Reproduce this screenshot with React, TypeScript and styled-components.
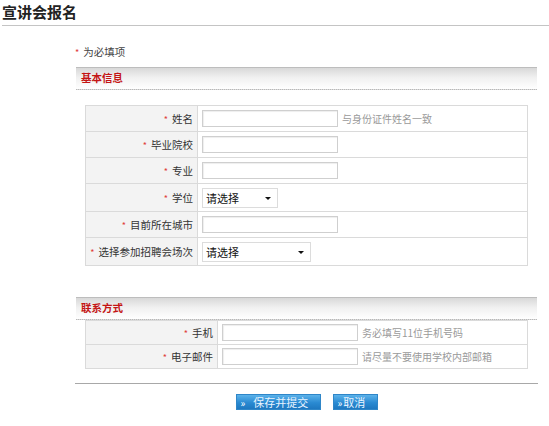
import React from "react";
import styled, { createGlobalStyle } from "styled-components";

type Field = {
  label: string;
  kind: "text" | "select";
  width?: number;
  hint?: string;
};

const basicFields: Field[] = [
  { label: "姓名", kind: "text", hint: "与身份证件姓名一致" },
  { label: "毕业院校", kind: "text" },
  { label: "专业", kind: "text" },
  { label: "学位", kind: "select", width: 76 },
  { label: "目前所在城市", kind: "text" },
  { label: "选择参加招聘会场次", kind: "select", width: 109 },
];

const contactFields: Field[] = [
  { label: "手机", kind: "text", hint: "务必填写11位手机号码" },
  { label: "电子邮件", kind: "text", hint: "请尽量不要使用学校内部邮箱" },
];

const GlobalStyle = createGlobalStyle`
  body {
    margin: 0;
    background: #fff;
    font-family: "Noto Sans CJK SC", "Noto Sans", sans-serif;
    font-size: 10.5px;
    color: #333;
  }
`;

const Page = styled.div`
  width: 549px;
  padding-left: 2px;
  box-sizing: border-box;
`;

const Title = styled.h1`
  margin: 0;
  height: 25px;
  line-height: 24px;
  font-size: 15px;
  font-weight: bold;
  color: #222;
  border-bottom: 1px solid #c4c4c4;
`;

const Form = styled.div`
  width: 463px;
  margin-left: 73px;
`;

const Note = styled.div`
  margin-top: 18px;
  height: 16px;
  line-height: 16px;
  color: #444;
  font-size: 10.5px;
`;

const Star = styled.span`
  color: #e03a3a;
  font-size: 9px;
  margin-right: 4px;
`;

const SectionHead = styled.div<{ $top: number }>`
  margin: ${(p) => p.$top}px 1px 0 1px;
  height: 21px;
  line-height: 20px;
  padding-left: 5px;
  font-size: 10.5px;
  font-weight: bold;
  color: #c41414;
  border-top: 1px solid #bdbdbd;
  background: linear-gradient(#d8d8d8, #f0f0f0 45%, #ffffff);
  border-bottom: 1px dotted #b8b8b8;
`;

const Table = styled.table<{ $top: number }>`
  margin: ${(p) => p.$top}px 0 0 10px;
  width: 443px;
  table-layout: fixed;
  border-collapse: collapse;
  border: 1px solid #d6d6d6;
`;

const Row = styled.tr<{ $h: number }>`
  height: ${(p) => p.$h}px;
`;

const LabelCell = styled.td<{ $w: number }>`
  width: ${(p) => p.$w}px;
  padding: 0 4px 0 0;
  text-align: right;
  background: #f3f3f3;
  border: 1px solid #dadada;
  color: #333;
  white-space: nowrap;
`;

const ValueCell = styled.td`
  padding: 0 0 0 4px;
  border: 1px solid #dadada;
  color: #999;
  white-space: nowrap;
`;

const TextInput = styled.input`
  box-sizing: border-box;
  width: 136px;
  height: 17px;
  margin: 0;
  padding: 0 3px;
  border: 1px solid #cfcfcf;
  box-shadow: inset 1px 1px 1px #eee;
  vertical-align: middle;
  font: inherit;
`;

const Hint = styled.span`
  margin-left: 4px;
  font-size: 10px;
  color: #9a9a9a;
  vertical-align: middle;
`;

const SelectWrap = styled.span<{ $w: number }>`
  position: relative;
  display: inline-block;
  vertical-align: middle;
  width: ${(p) => p.$w}px;
  height: 20px;

  &::after {
    content: "";
    position: absolute;
    right: 7px;
    top: 9px;
    border-left: 3px solid transparent;
    border-right: 3px solid transparent;
    border-top: 3px solid #111;
    pointer-events: none;
  }
`;

const Select = styled.select`
  appearance: none;
  box-sizing: border-box;
  width: 100%;
  height: 20px;
  margin: 0;
  padding: 0 0 0 3px;
  border: 1px solid #dcdcdc;
  background: #fff;
  font-family: "Noto Sans CJK SC", sans-serif;
  font-size: 11px;
  color: #111;
`;

const BottomLine = styled.div`
  margin-top: 14px;
  border-top: 1px solid #a8a8a8;
`;

const Buttons = styled.div`
  display: flex;
  justify-content: center;
  gap: 12px;
  margin-top: 10px;
`;

const Button = styled.button<{ $w: number }>`
  width: ${(p) => p.$w}px;
  height: 16px;
  padding: 0 0 0 4px;
  border: 1px solid #2f86c8;
  background: linear-gradient(#5bb2ea, #2a8ad2 55%, #1e78c0);
  color: #e8f4ff;
  font-family: "Noto Sans CJK SC", sans-serif;
  font-size: 11px;
  line-height: 14px;
  text-align: left;
  white-space: nowrap;
  cursor: pointer;
`;

const Chevron = styled.span<{ $gap: number }>`
  font-size: 10px;
  margin-right: ${(p) => p.$gap}px;
  color: #fff;
`;

const rowHeight = (f: Field, tall: boolean) =>
  tall ? (f.kind === "select" ? 28 : 26) : 24;

const renderRows = (fields: Field[], labelW: number, tall: boolean) =>
  fields.map((f) => (
    <Row key={f.label} $h={rowHeight(f, tall)}>
      <LabelCell $w={labelW}>
        <Star>*</Star>
        {f.label}
      </LabelCell>
      <ValueCell>
        {f.kind === "text" ? (
          <TextInput type="text" />
        ) : (
          <SelectWrap $w={f.width || 76}>
            <Select defaultValue="">
              <option value="">请选择</option>
            </Select>
          </SelectWrap>
        )}
        {f.hint && <Hint>{f.hint}</Hint>}
      </ValueCell>
    </Row>
  ));

const App = () => {
  return (
    <Page>
      <GlobalStyle />
      <Title>宣讲会报名</Title>
      <Form>
        <Note>
          <Star>*</Star>为必填项
        </Note>
        <SectionHead $top={7}>基本信息</SectionHead>
        <Table $top={15}>
          <tbody>{renderRows(basicFields, 107, true)}</tbody>
        </Table>
        <SectionHead $top={31}>联系方式</SectionHead>
        <Table $top={0}>
          <tbody>{renderRows(contactFields, 127, false)}</tbody>
        </Table>
        <BottomLine />
        <Buttons>
          <Button type="button" $w={85}>
            <Chevron $gap={8}>»</Chevron>保存并提交
          </Button>
          <Button type="button" $w={45}>
            <Chevron $gap={1}>»</Chevron>取消
          </Button>
        </Buttons>
      </Form>
    </Page>
  );
};

export default App;
